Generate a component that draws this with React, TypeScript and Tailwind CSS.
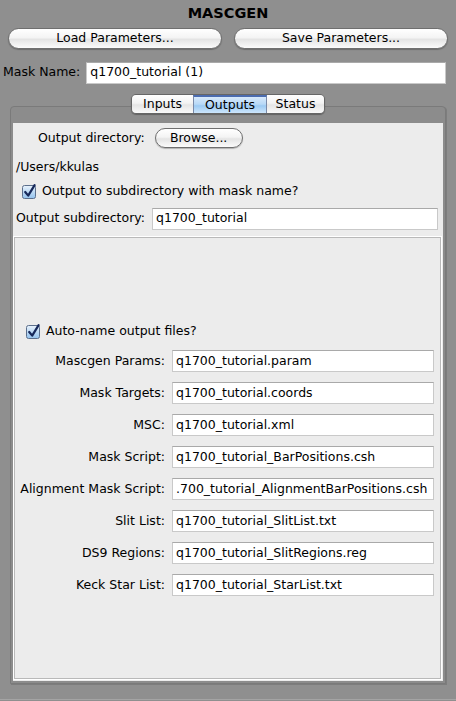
import React from "react";

const aquaBtn =
  "border border-[#6f6f6f] rounded-full bg-[linear-gradient(to_bottom,#ffffff_0%,#f4f4f4_45%,#e4e4e4_55%,#fbfbfb_100%)] shadow-[0_1px_1px_rgba(0,0,0,0.25)] flex items-center justify-center text-black";

function CheckBox() {
  return (
    <svg width="15" height="15" viewBox="0 0 15 15" className="shrink-0">
      <defs>
        <linearGradient id="cbg" x1="0" y1="0" x2="0" y2="1">
          <stop offset="0" stopColor="#eaf3fc" />
          <stop offset="0.5" stopColor="#bcd9f4" />
          <stop offset="1" stopColor="#94c3ee" />
        </linearGradient>
      </defs>
      <rect x="0.5" y="1.5" width="13" height="13" rx="2" fill="url(#cbg)" stroke="#5c6f8c" />
      <path d="M3.2 8 L6.2 11.6 L12.6 1.2" fill="none" stroke="#16285a" strokeWidth="2.2" strokeLinecap="round" strokeLinejoin="round" />
    </svg>
  );
}

function Field({ value, className = "" }: { value: string; className?: string }) {
  return (
    <div
      className={
        "h-[22px] bg-white border border-[#c9c9c9] border-t-[#a9a9a9] flex items-center pl-[3px] overflow-hidden whitespace-nowrap " +
        className
      }
    >
      {value}
    </div>
  );
}

const rows: [string, string][] = [
  ["Mascgen Params:", "q1700_tutorial.param"],
  ["Mask Targets:", "q1700_tutorial.coords"],
  ["MSC:", "q1700_tutorial.xml"],
  ["Mask Script:", "q1700_tutorial_BarPositions.csh"],
  ["Alignment Mask Script:", ".700_tutorial_AlignmentBarPositions.csh"],
  ["Slit List:", "q1700_tutorial_SlitList.txt"],
  ["DS9 Regions:", "q1700_tutorial_SlitRegions.reg"],
  ["Keck Star List:", "q1700_tutorial_StarList.txt"],
];

export default function App() {
  return (
    <div className="w-[456px] h-[701px] bg-[#8f8f8f] flex flex-col text-[12.5px] text-black font-['DejaVu_Sans',sans-serif] overflow-hidden">
      {/* title */}
      <div className="h-[27px] flex items-center justify-center text-[14.5px] font-bold">MASCGEN</div>

      {/* load / save */}
      <div className="mt-[1px] h-[21px] px-[8px] flex gap-[12px]">
        <div className={aquaBtn + " flex-1"}>Load Parameters...</div>
        <div className={aquaBtn + " flex-1"}>Save Parameters...</div>
      </div>

      {/* mask name */}
      <div className="mt-[13px] h-[21px] pl-[3px] pr-[10px] flex items-center gap-[6px]">
        <span>Mask Name:</span>
        <Field value="q1700_tutorial (1)" className="flex-1 h-[21px]" />
      </div>

      {/* tabs */}
      <div className="mt-[11px] h-[20px] flex justify-center relative z-10">
        <div className="flex border border-[#666] rounded-[5px] overflow-hidden shadow-[0_1px_1px_rgba(0,0,0,0.3)]">
          <div className="w-[61px] flex items-center justify-center bg-[linear-gradient(to_bottom,#ffffff_0%,#f3f3f3_45%,#e5e5e5_55%,#fafafa_100%)]">
            Inputs
          </div>
          <div className="w-[74px] flex items-center justify-center border-x border-[#7a8aa8] border-t-2 border-t-[#4b6cb0] bg-[linear-gradient(to_bottom,#d7e9fb_0%,#b8d9f7_45%,#9ccaf3_55%,#cde6fc_100%)]">
            Outputs
          </div>
          <div className="w-[57px] flex items-center justify-center bg-[linear-gradient(to_bottom,#ffffff_0%,#f3f3f3_45%,#e5e5e5_55%,#fafafa_100%)]">
            Status
          </div>
        </div>
      </div>

      {/* tab panel */}
      <div className="-mt-[8px] mx-[10px] mb-[15px] flex-1 flex flex-col border border-[#7a7a7a] rounded-t-[4px] bg-[#8c8c8c] pt-[16px] px-[2px] pb-[2px] shadow-[1px_1px_0_#7d7d7d]">
        <div className="flex-1 flex flex-col bg-[#ececec]">
          {/* output directory */}
          <div className="mt-[5px] h-[20px] pl-[25px] flex items-center gap-[10px]">
            <span>Output directory:</span>
            <div className={aquaBtn + " w-[88px] h-[20px]"}>Browse...</div>
          </div>

          <div className="mt-[10px] h-[18px] pl-[3px] flex items-center">/Users/kkulas</div>

          <div className="mt-[6px] h-[18px] pl-[9px] flex items-center gap-[5px]">
            <CheckBox />
            <span>Output to subdirectory with mask name?</span>
          </div>

          <div className="mt-[8px] h-[21px] pl-[3px] pr-[5px] flex items-center gap-[7px]">
            <span>Output subdirectory:</span>
            <Field value="q1700_tutorial" className="flex-1 h-[21px]" />
          </div>

          {/* inner panel */}
          <div className="mt-[8px] ml-[1px] mr-[2px] mb-[2px] flex-1 border border-[#b9b9b9] ring-1 ring-white bg-[#ececec] flex flex-col">
            <div className="mt-[84px] h-[18px] pl-[11px] flex items-center gap-[5px]">
              <CheckBox />
              <span>Auto-name output files?</span>
            </div>
            <div className="mt-[10px] flex flex-col gap-[10px]">
              {rows.map(([label, value]) => (
                <div key={label} className="flex items-center">
                  <span className="w-[150px] text-right">{label}</span>
                  <Field value={value} className="ml-[7px] mr-[6px] flex-1" />
                </div>
              ))}
            </div>
          </div>
        </div>
      </div>
      <div className="h-px bg-[#a4a4a4] mb-[1px]" />
    </div>
  );
}
